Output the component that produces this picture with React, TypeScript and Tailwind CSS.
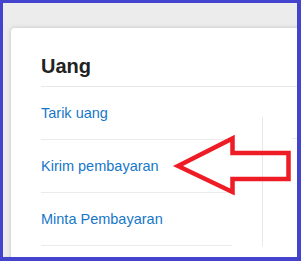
export default function App() {
  const items = ["Tarik uang", "Kirim pembayaran", "Minta Pembayaran"];
  return (
    <div
      className="relative w-[301px] h-[261px] overflow-hidden bg-[#4343cd] pt-[3px] pl-[3px] pr-[4px] pb-[4px]"
      style={{ fontFamily: '"Liberation Sans", Arial, sans-serif' }}
    >
      <div className="h-full w-full overflow-hidden bg-[#ececec] pt-[25px] pl-[8px] shadow-[inset_0_-1px_0_#e4e4e4]">
        <div className="w-[420px] h-[300px] rounded-[4px] bg-white pl-[30px] shadow-[0_0_4px_rgba(0,0,0,0.18)]">
          <div className="pt-[26px] pb-[8px] border-b border-[#e8e8e8]">
            <div className="text-[20px] leading-[24px] font-bold text-[#222222]">Uang</div>
          </div>
          <div className="flex">
            <div className="w-[191px] flex flex-col">
              {items.map((t) => (
                <div
                  key={t}
                  className="py-[16px] border-b border-[#ebebeb] text-[14.5px] leading-[20px] text-[#1677c9]"
                >
                  {t}
                </div>
              ))}
            </div>
            <div className="ml-[30px] mt-[30px] border-l border-[#e8e8e8] pl-[29px] flex-1">
              <div className="h-[22px] border-b border-[#ebebeb]"></div>
            </div>
          </div>
        </div>
      </div>
      <svg
        className="absolute left-0 top-0"
        width="301"
        height="261"
        viewBox="0 0 301 261"
      >
        <polygon
          points="178,166 232.5,138.5 232.5,153 288.5,153 288.5,179 232.5,179 232.5,192"
          fill="none"
          stroke="#ee1c25"
          strokeWidth="4.5"
          strokeLinejoin="miter"
        />
      </svg>
    </div>
  );
}
